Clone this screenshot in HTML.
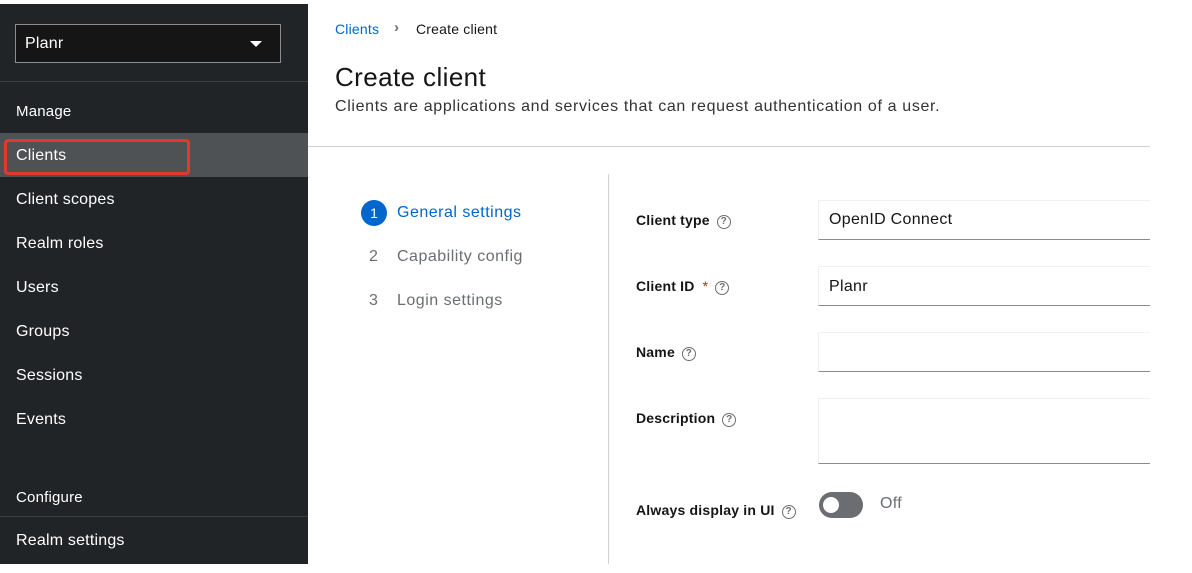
<!DOCTYPE html>
<html><head><style>
*{margin:0;padding:0;box-sizing:border-box}
body{width:1192px;height:573px;background:#fff;font-family:"Liberation Sans",sans-serif;position:relative;overflow:hidden;color:#151515}
.a{position:absolute;white-space:nowrap}
#side{position:absolute;left:0;top:4px;width:308px;height:560px;background:#212427}
.nav{position:absolute;left:16px;color:#fff;font-size:16px;line-height:20px;letter-spacing:.2px}
.lbl{position:absolute;left:636px;font-size:14px;font-weight:bold;line-height:18px;letter-spacing:.2px}
.q{display:inline-block;width:14px;height:14px;border:1.3px solid #6a6e73;border-radius:50%;font-size:10px;line-height:11px;text-align:center;color:#6a6e73;font-weight:bold;vertical-align:-1px;margin-left:7px;position:relative;top:-2px}
.inp{position:absolute;left:818px;width:332px;border:1px solid #f0f0f0;border-right:none;border-bottom:1px solid #8a8d90;font-size:16px;padding-left:10px;letter-spacing:.3px}
</style></head><body>
<div id="side">
 <div class="a" style="left:15px;top:20px;width:266px;height:39px;background:#151515;border:1px solid #8a8d90"></div>
 <div class="nav" style="top:30px;left:25px">Planr</div>
 <div class="a" style="left:250px;top:37px;width:0;height:0;border-left:6px solid transparent;border-right:6px solid transparent;border-top:6px solid #fff"></div>
 <div class="a" style="left:0;top:77px;width:308px;height:1px;background:#3c3f42"></div>
 <div class="nav" style="top:98px;font-size:15px">Manage</div>
 <div class="a" style="left:0;top:129px;width:308px;height:44px;background:#4f5255"></div>
 <div class="a" style="left:4px;top:135px;width:186px;height:36px;border:3px solid #e03a2f;border-radius:4px"></div>
 <div class="nav" style="top:142px">Clients</div>
 <div class="nav" style="top:186px">Client scopes</div>
 <div class="nav" style="top:230px">Realm roles</div>
 <div class="nav" style="top:274px">Users</div>
 <div class="nav" style="top:318px">Groups</div>
 <div class="nav" style="top:362px">Sessions</div>
 <div class="nav" style="top:406px">Events</div>
 <div class="nav" style="top:484px;font-size:15px">Configure</div>
 <div class="a" style="left:0;top:512px;width:308px;height:1px;background:#3c3f42"></div>
 <div class="nav" style="top:527px">Realm settings</div>
</div>
<div class="a" style="left:335px;top:21px;font-size:14px;color:#0066cc;letter-spacing:.2px">Clients</div>
<div class="a" style="left:394px;top:19px;font-size:15px;color:#6a6e73;font-weight:bold">›</div>
<div class="a" style="left:416px;top:21px;font-size:14px;letter-spacing:.2px">Create client</div>
<div class="a" style="left:335px;top:62px;font-size:26px;letter-spacing:.4px">Create client</div>
<div class="a" style="left:335px;top:98px;font-size:16px;color:#333;letter-spacing:.65px">Clients are applications and services that can request authentication of a user.</div>
<div class="a" style="left:308px;top:146px;width:842px;height:1px;background:#d2d2d2"></div>
<div class="a" style="left:608px;top:174px;width:1px;height:390px;background:#d2d2d2"></div>
<div class="a" style="left:361px;top:200px;width:26px;height:26px;border-radius:50%;background:#0066cc;color:#fff;font-size:14px;text-align:center;line-height:26px">1</div>
<div class="a" style="left:397px;top:204px;font-size:16px;color:#0066cc;letter-spacing:.5px">General settings</div>
<div class="a" style="left:369px;top:248px;font-size:16px;color:#6a6e73">2</div>
<div class="a" style="left:397px;top:248px;font-size:16px;color:#6a6e73;letter-spacing:.5px">Capability config</div>
<div class="a" style="left:369px;top:292px;font-size:16px;color:#6a6e73">3</div>
<div class="a" style="left:397px;top:292px;font-size:16px;color:#6a6e73;letter-spacing:.5px">Login settings</div>
<div class="lbl" style="top:211px">Client type<span class="q">?</span></div>
<div class="lbl" style="top:277px">Client ID <span style="color:#c9190b;font-weight:normal;margin-left:4px">*</span><span class="q">?</span></div>
<div class="lbl" style="top:343px">Name<span class="q">?</span></div>
<div class="lbl" style="top:409px">Description<span class="q">?</span></div>
<div class="lbl" style="top:501px">Always display in UI<span class="q">?</span></div>
<div class="inp" style="top:200px;height:40px;line-height:38px">OpenID Connect</div>
<div class="inp" style="top:266px;height:40px;line-height:40px">Planr</div>
<div class="inp" style="top:332px;height:40px"></div>
<div class="inp" style="top:398px;height:66px"></div>
<div class="a" style="left:819px;top:492px;width:44px;height:26px;border-radius:13px;background:#6a6e73"></div>
<div class="a" style="left:823px;top:497px;width:16px;height:16px;border-radius:50%;background:#fff"></div>
<div class="a" style="left:880px;top:495px;font-size:16px;color:#6a6e73;letter-spacing:.3px">Off</div>
</body></html>
